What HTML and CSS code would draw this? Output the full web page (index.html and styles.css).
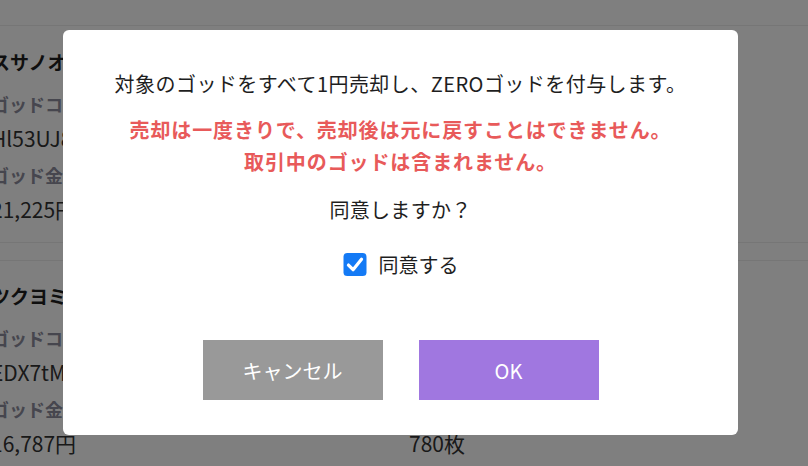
FILE: index.html
```html
<!DOCTYPE html>
<html lang="ja">
<head>
<meta charset="utf-8">
<title>ZEROゴッド付与</title>
<link rel="stylesheet" href="styles.css">
</head>
<body>
<div class="page">
  <header class="topbar"></header>
  <main class="cards">
    <section class="card">
      <h2 class="card-title">スサノオ</h2>
      <div class="fields">
        <div class="field"><div class="label">ゴッドコード</div><div class="value">Hl53UJ8Q</div></div>
        <div class="field"><div class="label">ゴッド種別</div><div class="value">ノーマル</div></div>
        <div class="field"><div class="label">ゴッド金額</div><div class="value">21,225円</div></div>
        <div class="field"><div class="label">ゴッド枚数</div><div class="value">125枚</div></div>
      </div>
    </section>
    <section class="card">
      <h2 class="card-title">ツクヨミ</h2>
      <div class="fields">
        <div class="field"><div class="label">ゴッドコード</div><div class="value">EDX7tM2K</div></div>
        <div class="field"><div class="label">ゴッド種別</div><div class="value">ノーマル</div></div>
        <div class="field"><div class="label">ゴッド金額</div><div class="value">16,787円</div></div>
        <div class="field"><div class="label">ゴッド枚数</div><div class="value">780枚</div></div>
      </div>
    </section>
  </main>
</div>

<div class="overlay">
  <div class="modal" role="dialog">
    <p class="lead">対象のゴッドをすべて1円売却し、ZEROゴッドを付与します。</p>
    <p class="warn">売却は一度きりで、売却後は元に戻すことはできません。<br>取引中のゴッドは含まれません。</p>
    <p class="question">同意しますか？</p>
    <label class="agree">
      <span class="check">
        <svg viewBox="0 0 24 24" width="24" height="23" aria-hidden="true">
          <rect x="0" y="0" width="24" height="24" rx="4" fill="#147af5"/>
          <path d="M5.2 12.6 L10 17.4 L18.8 6.6" fill="none" stroke="#fff" stroke-width="3.4" stroke-linecap="round" stroke-linejoin="round"/>
        </svg>
      </span>
      <span class="agree-text">同意する</span>
    </label>
    <div class="actions">
      <button class="btn btn-cancel" type="button">キャンセル</button>
      <button class="btn btn-ok" type="button">OK</button>
    </div>
  </div>
</div>
</body>
</html>
```

FILE: styles.css
```css
* { box-sizing: border-box; }

html, body {
  margin: 0;
  padding: 0;
}

body {
  width: 808px;
  height: 466px;
  overflow: hidden;
  background: #ffffff;
  font-family: "Noto Sans CJK JP", "Noto Sans", sans-serif;
  color: #222222;
}

.page {
  width: 808px;
}

.topbar {
  height: 26px;
  border-bottom: 1px solid #ececec;
}

.cards {
  margin-left: -9px;
}

.card {
  padding: 22px 0 18px;
  border-bottom: 1px solid #ececec;
}

.card + .card {
  margin-top: 17px;
  border-top: 1px solid #ececec;
  padding-top: 21px;
}

.card-title {
  margin: 0;
  font-size: 19px;
  line-height: 28px;
  font-weight: 700;
  color: #1e1e1e;
}

.fields {
  margin-top: 14px;
  display: grid;
  grid-template-columns: 418px 1fr;
  row-gap: 8px;
}

.label {
  font-size: 18px;
  line-height: 28px;
  font-weight: 700;
  color: #8c8c9c;
}

.value {
  margin-top: 5px;
  font-size: 21px;
  line-height: 30px;
  color: #333333;
}

.overlay {
  position: fixed;
  inset: 0;
  background: rgba(0, 0, 0, 0.5);
  padding: 30px 0 0 63px;
}

.modal {
  width: 675px;
  height: 405px;
  background: #ffffff;
  border-radius: 6px;
  padding-top: 40px;
  display: flex;
  flex-direction: column;
  align-items: center;
  text-align: center;
}

.lead,
.warn,
.question {
  margin: 0;
  font-size: 20px;
}

.lead {
  line-height: 28px;
  color: #1e1e1e;
  letter-spacing: 0.45px;
}

.warn {
  margin-top: 16px;
  line-height: 32px;
  font-weight: 700;
  color: #e85a5a;
  letter-spacing: 0.9px;
}

.question {
  margin-top: 18px;
  line-height: 28px;
  color: #1e1e1e;
  letter-spacing: 0.3px;
}

.agree {
  margin-top: 26px;
  height: 28px;
  display: flex;
  align-items: center;
  gap: 12px;
  font-size: 20px;
  color: #1e1e1e;
}

.check {
  display: flex;
  width: 24px;
  height: 23px;
}

.actions {
  margin-top: 62px;
  display: flex;
  gap: 36px;
}

.btn {
  width: 180px;
  height: 60px;
  border: none;
  border-radius: 0;
  font-family: "Noto Sans CJK JP", "Noto Sans", sans-serif;
  font-size: 20px;
  color: #ffffff;
  padding: 0;
}

.btn-cancel {
  background: #999999;
}

.btn-ok {
  background: #a077e0;
}
```
